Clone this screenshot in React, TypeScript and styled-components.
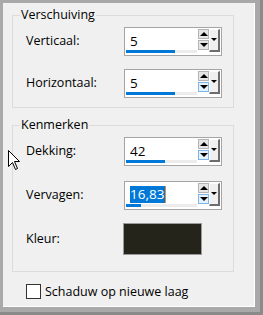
import React from 'react';
import styled, { createGlobalStyle } from 'styled-components';

const GlobalStyle = createGlobalStyle`
  html, body {
    margin: 0;
    padding: 0;
    background: #f0f0f0;
  }
  body {
    font-family: 'Open Sans', 'Noto Sans', sans-serif;
    font-size: 12px;
    color: #000;
  }
`;

const Frame = styled.div`
  position: relative;
  width: 263px;
  height: 315px;
  box-sizing: border-box;
  background: #a9a9a9;
  padding: 3px 5px 5px 3px;
  border-right: 3px solid #8a8a8a;
  border-bottom: 3px solid #8a8a8a;
`;

const Panel = styled.div`
  height: 100%;
  box-sizing: border-box;
  background: #f0f0f0;
  border-right: 1px solid #ffffff;
  border-bottom: 1px solid #ffffff;
  padding: 4px 20px 0 9px;
  display: flex;
  flex-direction: column;
`;

const Group = styled.fieldset<{ $height: number; $gap?: number }>`
  margin: ${p => p.$gap ?? 0}px 0 0 0;
  padding: 4px 11px 0 13px;
  min-inline-size: 0;
  height: ${p => p.$height}px;
  box-sizing: border-box;
  border: 1px solid #dcdcdc;
  display: flex;
  flex-direction: column;
`;

const Legend = styled.legend`
  margin-left: -6px;
  padding: 0 1px;
  font-size: 12.5px;
  line-height: 16px;
`;

const Row = styled.div<{ $top: number; $height?: number }>`
  display: flex;
  align-items: center;
  justify-content: space-between;
  margin-top: ${p => p.$top}px;
  height: ${p => p.$height ?? 29}px;
`;

const Label = styled.span`
  font-size: 12.5px;
  margin-top: -2px;
`;

const SpinBox = styled.div`
  width: 98px;
  height: 29px;
  box-sizing: border-box;
  border: 1px solid #a5a5a5;
  background: #ffffff;
  display: flex;
  padding: 1px 0 1px 0;
`;

const Field = styled.div`
  width: 71px;
  display: flex;
  flex-direction: column;
  padding-left: 1px;
`;

const Value = styled.div`
  flex: 1;
  display: flex;
  align-items: center;
  padding-left: 4px;
  font-size: 13.5px;
  padding-top: 2px;
`;

const Selected = styled.span`
  background: #0078d7;
  color: #ffffff;
  line-height: 17px;
  padding: 0 1px 0 0;
  border-right: 1px solid #f08a24;
`;

const Track = styled.div`
  height: 3px;
  margin: 0 0 1px 0;
  background: #ececec;
`;

const Fill = styled.div`
  height: 100%;
  background: #0078d7;
`;

const Arrows = styled.div`
  margin-left: 1px;
  display: flex;
  flex-direction: column;
  gap: 1px;
  width: 11px;
`;

const ArrowBtn = styled.div<{ $dir: 'up' | 'down'; $hot?: boolean }>`
  height: 10px;
  box-sizing: border-box;
  border: 1px solid ${p => (p.$hot ? '#7ab4e8' : '#b4b4b4')};
  background: ${p => (p.$hot ? '#e5f1fb' : '#e6e6e6')};
  display: flex;
  align-items: center;
  justify-content: center;

  &::after {
    content: '';
    width: 0;
    height: 0;
    border-left: 4px solid transparent;
    border-right: 4px solid transparent;
    ${p =>
      p.$dir === 'up'
        ? 'border-bottom: 4px solid #000;'
        : 'border-top: 4px solid #000;'}
  }
`;

const DropBtn = styled.div`
  width: 11px;
  height: 23px;
  box-sizing: border-box;
  background: #f0f0f0;
  border-top: 1px solid #ffffff;
  border-left: 1px solid #ffffff;
  border-right: 2px solid #6d6d6d;
  border-bottom: 2px solid #6d6d6d;
  display: flex;
  justify-content: center;
  padding-top: 8px;

  &::after {
    content: '';
    width: 0;
    height: 0;
    border-left: 3px solid transparent;
    border-right: 3px solid transparent;
    border-top: 3px solid #000;
  }
`;

const Swatch = styled.div<{ $color: string }>`
  width: 79px;
  height: 32px;
  box-sizing: border-box;
  border: 1px solid #9a9a9a;
  background: ${p => p.$color};
  margin-right: 20px;
`;

const CheckRow = styled.label`
  display: flex;
  align-items: center;
  gap: 4px;
  margin: 11px 0 0 14px;
  font-size: 12.5px;
`;

const Box = styled.span`
  width: 13px;
  height: 13px;
  border: 1px solid #333333;
  background: #ffffff;
`;

const Cursor = styled.svg`
  position: absolute;
  left: 8px;
  top: 150px;
`;

type SpinProps = { value: string; fill: number; hot?: boolean; selected?: boolean };

function Spin({ value, fill, hot, selected }: SpinProps) {
  return (
    <SpinBox>
      <Field>
        <Value>{selected ? <Selected>{value}</Selected> : value}</Value>
        <Track>
          <Fill style={{ width: fill }} />
        </Track>
      </Field>
      <Arrows>
        <ArrowBtn $dir="up" />
        <ArrowBtn $dir="down" $hot={hot} />
      </Arrows>
      <DropBtn />
    </SpinBox>
  );
}

export default function App() {
  return (
    <>
      <GlobalStyle />
      <Frame>
        <Panel>
          <Group $height={101}>
            <Legend>Verschuiving</Legend>
            <Row $top={0}>
              <Label>Verticaal:</Label>
              <Spin value="5" fill={49} />
            </Row>
            <Row $top={13}>
              <Label>Horizontaal:</Label>
              <Spin value="5" fill={49} hot />
            </Row>
          </Group>
          <Group $height={155} $gap={9}>
            <Legend>Kenmerken</Legend>
            <Row $top={0}>
              <Label>Dekking:</Label>
              <Spin value="42" fill={39} hot />
            </Row>
            <Row $top={15}>
              <Label>Vervagen:</Label>
              <Spin value="16,83" fill={15} hot selected />
            </Row>
            <Row $top={13} $height={32}>
              <Label>Kleur:</Label>
              <Swatch $color="#25241a" />
            </Row>
          </Group>
          <CheckRow>
            <Box />
            Schaduw op nieuwe laag
          </CheckRow>
        </Panel>
        <Cursor width="12" height="21" viewBox="0 0 12 21">
          <path
            d="M0.5 0.5 L0.5 16.5 L4.5 12.5 L7.5 19.5 L9.5 18.5 L6.5 11.5 L11.5 11.5 Z"
            fill="#ffffff"
            stroke="#000000"
            strokeWidth="1"
          />
        </Cursor>
      </Frame>
    </>
  );
}
